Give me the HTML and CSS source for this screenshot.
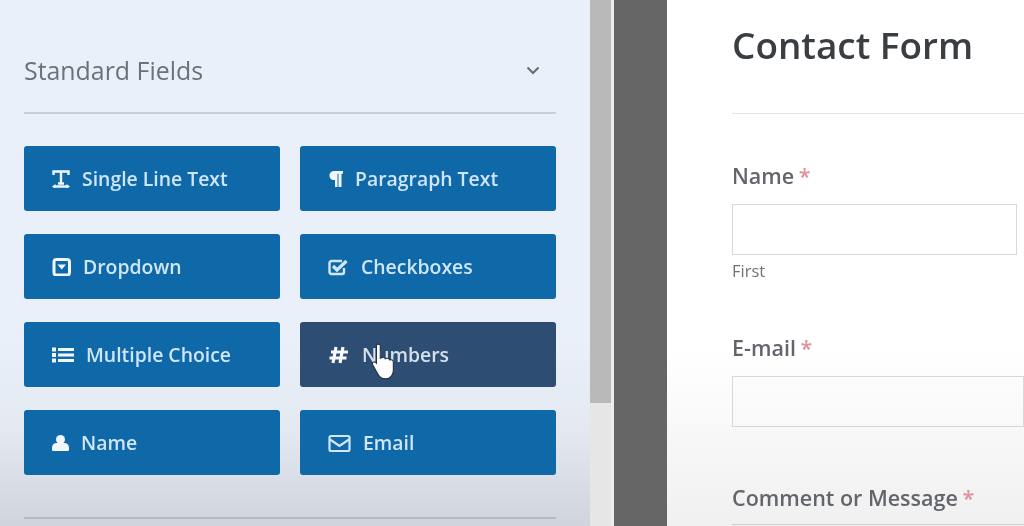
FILE: index.html
```html
<!DOCTYPE html>
<html>
  <head>
    <meta charset="UTF-8" />
    <title>Contact Form</title>
    <link rel="stylesheet" href="styles.css">
  </head>
  <body>
    <div class="page">
      <div class="sidebar">
        <div class="section-head">
          <span class="section-title">Standard Fields</span>
          <svg class="chevron" width="14" height="9" viewBox="0 0 14 9">
            <path d="M1.5 1.5 7 7l5.5-5.5" fill="none" stroke="#646c76" stroke-width="2" />
          </svg>
        </div>
        <div class="field-grid">
          <a class="field-btn">
            <svg class="icon" width="18" height="18" viewBox="0 0 18 18">
              <path d="M1.500 5V1.500h15V5M9 2v12M6 13.500h6M3 16.500h12" fill="none" stroke="#f0f6fc" stroke-width="2.400" />
              <path d="M3.500 14 0 16.500 3.500 19zM14.500 14 18 16.500 14.500 19z" fill="#f0f6fc" />
            </svg>
            Single Line Text
          </a>
          <a class="field-btn">
            <svg class="icon" width="15" height="18" viewBox="0 0 15 18">
              <path d="M5 1h10v2.800h-1.500V17h-3V3.800H9.500V17H7v-7A4.500 4.500 0 0 1 5 1z" fill="#f0f6fc" />
            </svg>
            Paragraph Text
          </a>
          <a class="field-btn">
            <svg class="icon" width="19" height="18" viewBox="0 0 19 18">
              <rect x="2" y="1.500" width="15.500" height="15.500" rx="2.500" fill="none" stroke="#f0f6fc" stroke-width="3" />
              <path d="M5.500 6.500h8.500l-4.250 5z" fill="#f0f6fc" />
            </svg>
            Dropdown
          </a>
          <a class="field-btn">
            <svg class="icon" width="21" height="18" viewBox="0 0 21 18">
              <path d="M16 10v4a2 2 0 0 1-2 2H3.500a2 2 0 0 1-2-2V5a2 2 0 0 1 2-2H14" fill="none" stroke="#d3e8f7" stroke-width="2.400" />
              <path d="m5 8 4 4L18.500 3" fill="none" stroke="#d3e8f7" stroke-width="3.200" />
            </svg>
            Checkboxes
          </a>
          <a class="field-btn">
            <svg class="icon" width="22" height="18" viewBox="0 0 22 18">
              <path d="M6 3.500h16M6 9h16M6 14.500h16" stroke="#f0f6fc" stroke-width="2.800" />
              <path d="M0 1.500h4v4H0zM0 7h4v4H0zM0 12.500h4v4H0z" fill="#f0f6fc" />
            </svg>
            Multiple Choice
          </a>
          <a class="field-btn hover">
            <svg class="icon" width="22" height="18" viewBox="0 0 22 18">
              <path d="M8 1 5 17M15 1l-3 16M3 6h17M1.500 12h17" fill="none" stroke="#f6f8fb" stroke-width="3.200" />
            </svg>
            Numbers
          </a>
          <a class="field-btn">
            <svg class="icon" width="17" height="18" viewBox="0 0 17 18">
              <circle cx="8.500" cy="5.500" r="4.500" fill="#f0f6fc" />
              <path d="M0 16v-2.500C0 11 2 9 4.500 9h8c2.500 0 4.500 2 4.500 4.500V16a1 1 0 0 1-1 1H1a1 1 0 0 1-1-1z" fill="#f0f6fc" />
            </svg>
            Name
          </a>
          <a class="field-btn">
            <svg class="icon" width="23" height="18" viewBox="0 0 23 18">
              <rect x="1.500" y="2" width="20" height="15" rx="1.500" fill="none" stroke="#d3e8f7" stroke-width="2.200" />
              <path d="m2 5.500 9.500 6.500L21 5.500" fill="none" stroke="#d3e8f7" stroke-width="2.200" />
            </svg>
            Email
          </a>
        </div>
        <div class="section-end"></div>
        <!-- mouse pointer from the recording -->
        <svg class="pointer" width="26" height="37" viewBox="0 0 22 34">
          <path d="M5 2.500c0-2 3.500-2 3.500 0V14c3-1.500 4-1 4.500.5 2-1 3.500-.5 4 1 2-.5 3.500 0 3.500 2.500v7c0 4-2.500 8-7 8s-6-2-8-6L1.500 20c-1-2 1.500-4 3.500-1.500z" fill="#fff" stroke="#1f2f45" stroke-width="1" />
        </svg>
      </div>
      <div class="scrollbar">
        <div class="scroll-thumb"></div>
      </div>
      <div class="gutter"></div>
      <div class="form-panel">
        <h1 class="form-title">Contact Form</h1>
        <form class="contact-form">
          <div class="form-row name-row">
            <label class="form-label">Name <span class="req">*</span></label>
            <input class="form-input short" type="text" />
            <div class="form-hint">First</div>
          </div>
          <div class="form-row email-row">
            <label class="form-label">E-mail <span class="req">*</span></label>
            <input class="form-input" type="text" />
          </div>
          <div class="form-row message-row">
            <label class="form-label">Comment or Message <span class="req">*</span></label>
            <div class="message-top"></div>
          </div>
        </form>
      </div>
    </div>
  </body>
</html>
```

FILE: styles.css
```css
html,
body {
  margin: 0;
  padding: 0;
  overflow: hidden;
}

body {
  font-family: "Open Sans", "Noto Sans", sans-serif;
  background-color: #666;
}

/* the reference is a frame of a video, everything is a little soft */
.page {
  display: flex;
  height: 526px;
  overflow: hidden;
  filter: blur(0.5px);
}

.sidebar {
  position: relative;
  box-sizing: border-box;
  width: 590px;
  padding-left: 24px;
  background: linear-gradient(#e9f0fa 0, #e9f0fa 340px, #e4e9f1 430px, #d0d5dd 526px);
}

.section-head {
  display: flex;
  justify-content: space-between;
  align-items: center;
  box-sizing: border-box;
  width: 532px;
  height: 114px;
  padding: 28px 16px 0 0;
  border-bottom: 2px solid #c8cfda;
}

.section-title {
  font-size: 24.9px;
  color: #6b727b;
}

.field-grid {
  display: grid;
  grid-template-columns: 256px 256px;
  grid-auto-rows: 65px;
  gap: 23px 20px;
  margin-top: 32px;
}

.field-btn {
  display: flex;
  align-items: center;
  gap: 12px;
  padding-left: 28px;
  border-radius: 3px;
  background-color: #0f68a8;
  color: #cfe6f7;
  font-size: 19.4px;
  font-weight: 600;
}

.field-btn.hover {
  background-color: #2d4d73;
  color: #d5e0ec;
}

.section-end {
  width: 532px;
  margin-top: 42px;
  border-top: 2px solid #b4b9c2;
}

.pointer {
  position: absolute;
  left: 370px;
  top: 343px;
}

.scrollbar {
  width: 21px;
  background-color: #e6e6e6;
}

.scroll-thumb {
  height: 403px;
  background-color: #b9b9b9;
}

.gutter {
  width: 53px;
  margin-left: 3px;
  background-color: #666;
  box-shadow: -3px 0 0 #eee;
}

.form-panel {
  flex: 1;
  padding-left: 65px;
  overflow: hidden;
  background: linear-gradient(#fff 0, #fff 350px, #f0f0f0 526px);
}

.form-title {
  margin: 22px 0 0;
  font-size: 36.9px;
  line-height: 46px;
  font-weight: 600;
  color: #3a3d42;
}

.contact-form {
  margin-top: 45px;
  padding-top: 48px;
  border-top: 1px solid #e3e3e3;
}

.form-row {
  display: flex;
  flex-direction: column;
}

.form-label {
  font-size: 21.5px;
  line-height: 28px;
  font-weight: 600;
  color: #62666c;
}

.req {
  margin-left: -1px;
  color: #e0909a;
}

.form-input {
  box-sizing: border-box;
  width: 100%;
  height: 51px;
  margin-top: 14px;
  border: 1px solid #d8d8d8;
  background: transparent;
}

.form-input.short {
  width: 285px;
}

.form-hint {
  font-size: 16.5px;
  line-height: 20px;
  margin-top: 6px;
  color: #6f7378;
}

.email-row {
  margin-top: 53px;
}

.message-row {
  margin-top: 57px;
}

.message-top {
  margin-top: 12px;
  border-top: 1px solid #d0d0d0;
}
```
